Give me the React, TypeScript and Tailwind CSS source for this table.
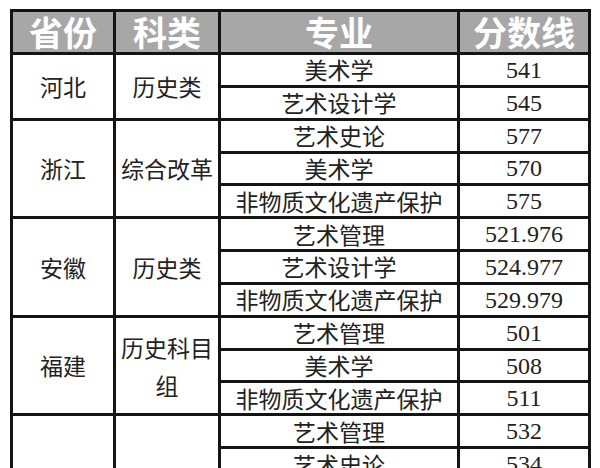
import { Fragment } from 'react';

type Row = { major: string; score: string };
type Group = { province: string; category: string[]; rows: Row[] };

const groups: Group[] = [
  {
    province: '河北',
    category: ['历史类'],
    rows: [
      { major: '美术学', score: '541' },
      { major: '艺术设计学', score: '545' },
    ],
  },
  {
    province: '浙江',
    category: ['综合改革'],
    rows: [
      { major: '艺术史论', score: '577' },
      { major: '美术学', score: '570' },
      { major: '非物质文化遗产保护', score: '575' },
    ],
  },
  {
    province: '安徽',
    category: ['历史类'],
    rows: [
      { major: '艺术管理', score: '521.976' },
      { major: '艺术设计学', score: '524.977' },
      { major: '非物质文化遗产保护', score: '529.979' },
    ],
  },
  {
    province: '福建',
    category: ['历史科目', '组'],
    rows: [
      { major: '艺术管理', score: '501' },
      { major: '美术学', score: '508' },
      { major: '非物质文化遗产保护', score: '511' },
    ],
  },
  {
    province: '',
    category: [],
    rows: [
      { major: '艺术管理', score: '532' },
      { major: '艺术史论', score: '534' },
    ],
  },
];

const span = ['', 'row-span-1', 'row-span-2', 'row-span-3'];
const cell = 'flex items-center justify-center border-r-[3px] border-b-[3px] border-[#141414]';
const cjk = "font-['Noto_Sans_CJK_SC',sans-serif]";
const serif = "font-['Liberation_Serif',serif]";

export default function App() {
  return (
    <div className="h-[468px] w-[600px] overflow-hidden bg-white pt-[9px] pl-[10px]">
      <div className="grid w-[581px] grid-cols-[103px_105px_239px_131px] grid-rows-[43px_repeat(13,32.85px)] border-t-[3px] border-l-[3px] border-[#141414] text-[#222]">
        {['省份', '科类', '专业', '分数线'].map((h) => (
          <div key={h} className={`${cell} ${cjk} bg-[#a7a7a7] text-[34px] font-bold leading-none text-white`}>
            {h}
          </div>
        ))}
        {groups.map((g, gi) => (
          <Fragment key={gi}>
            <div className={`${cell} ${cjk} ${span[g.rows.length]} text-[23px]`}>{g.province}</div>
            <div className={`${cell} ${cjk} ${span[g.rows.length]} flex-col text-[23px] leading-[38px]`}>
              {g.category.map((c) => (
                <span key={c}>{c}</span>
              ))}
            </div>
            {g.rows.map((r, ri) => (
              <Fragment key={ri}>
                <div className={`${cell} ${cjk} text-[23px] leading-none`}>{r.major}</div>
                <div className={`${cell} ${serif} text-[24px] leading-none`}>{r.score}</div>
              </Fragment>
            ))}
          </Fragment>
        ))}
      </div>
    </div>
  );
}
